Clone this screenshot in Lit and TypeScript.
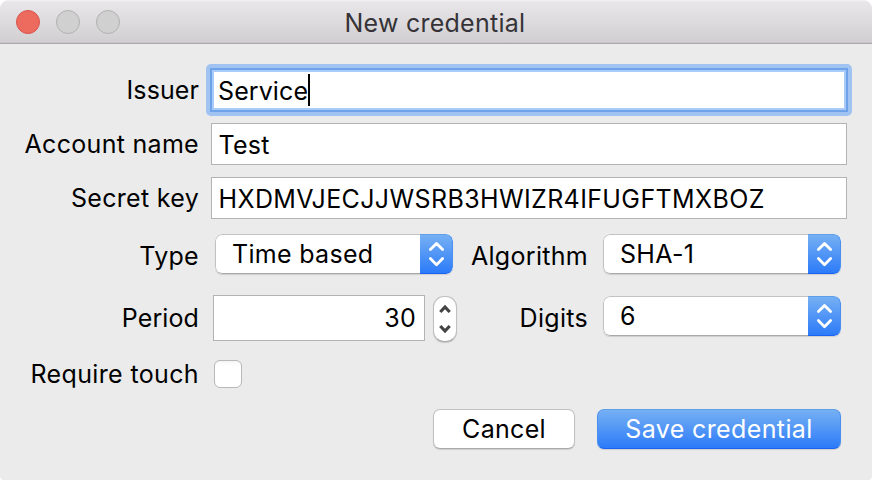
import { LitElement, html, css } from "lit";
import { customElement, property } from "lit/decorators.js";

@customElement("pop-up")
class PopUp extends LitElement {
  @property() value = "";

  static styles = css`
    :host {
      display: flex;
      box-sizing: border-box;
      width: 238px;
      height: 40px;
      border-radius: 7px;
      background: #fff;
      box-shadow: 0 1px 1px rgba(0, 0, 0, 0.12);
      overflow: hidden;
    }
    .value {
      flex: 1;
      box-sizing: border-box;
      border: 1px solid #c2c2c2;
      border-bottom-color: #a9a9a9;
      border-right: 0;
      border-radius: 7px 0 0 7px;
      padding-left: 16px;
      line-height: 38px;
      white-space: nowrap;
    }
    .cap {
      width: 33px;
      box-sizing: border-box;
      border: 1px solid #4a90ee;
      border-left: 0;
      border-top-color: #5f9fe9;
      border-bottom-color: #1b62f3;
      border-radius: 0 7px 7px 0;
      background: linear-gradient(#76b0f4, #2c7bf8);
    }
    svg {
      display: block;
    }
  `;

  render() {
    return html`
      <div class="value">${this.value}</div>
      <div class="cap">
        <svg width="32" height="38" viewBox="0 0 32 38" fill="none" stroke="#fff" stroke-width="2.8" stroke-linecap="round" stroke-linejoin="round">
          <path d="M10.4 14.6 L16.5 8.5 L22.6 14.6 M10.4 23.6 L16.5 29.7 L22.6 23.6" />
        </svg>
      </div>
    `;
  }
}

@customElement("app-root")
class AppRoot extends LitElement {
  static styles = css`
    :host {
      display: block;
      width: 872px;
      height: 480px;
      background: #fff;
      font: 25px/30px Inter, "Liberation Sans", sans-serif;
      letter-spacing: 0.3px;
      color: #000;
    }
    .window {
      height: 480px;
      border-radius: 9px 9px 4px 4px;
      background: #ebebeb;
      overflow: hidden;
    }
    .bar {
      display: flex;
      align-items: center;
      box-sizing: border-box;
      height: 44px;
      padding-left: 16px;
      gap: 16px;
      border-bottom: 1px solid #a9a9a9;
      background: linear-gradient(#f4f3f4 0, #e8e6e9 2px, #d1cfd2 42px, #bdbbbd 43px);
    }
    .light {
      box-sizing: border-box;
      width: 24px;
      height: 24px;
      border: 1px solid #b1b1b1;
      border-radius: 50%;
      background: #d0d0d0;
    }
    .close {
      border-color: #d9544b;
      background: #ed6a5f;
    }
    .title {
      flex: 1;
      margin-top: 3px;
      padding-left: 208.5px;
      color: #353337;
      white-space: nowrap;
      line-height: 40px;
      letter-spacing: 0.25px;
    }
    .form {
      display: flex;
      flex-direction: column;
      padding-top: 20px;
    }
    .row {
      display: flex;
    }
    .label {
      width: 199px;
      text-align: right;
      white-space: nowrap;
    }
    .field {
      box-sizing: border-box;
      width: 636px;
      height: 42px;
      margin-left: 12px;
      padding-left: 6.5px;
      border: 1px solid #b3b3b3;
      background: #fff;
      line-height: 42px;
      white-space: nowrap;
    }
    .issuer {
      height: 52px;
      margin-bottom: 7px;
    }
    .issuer .label {
      line-height: 53px;
    }
    .snug {
      letter-spacing: 0.1px;
    }
    .ring {
      box-sizing: border-box;
      width: 646px;
      height: 52px;
      margin-left: 7px;
      padding: 4px;
      border-radius: 5px;
      background: #a0c3f1;
    }
    .focused {
      display: flex;
      align-items: center;
      width: 638px;
      height: 44px;
      margin: 0;
      padding: 2px;
      border: 2px solid #6ea3ea;
      background: linear-gradient(#fff, #fff) content-box, #a8cbfa;
    }
    .focused .typed {
      padding: 2px 0 0 4px;
      line-height: 36px;
      letter-spacing: 0.1px;
    }
    .caret {
      width: 2px;
      height: 32px;
      background: #000;
    }
    .text-row {
      height: 42px;
      margin-bottom: 12px;
    }
    .text-row .label {
      line-height: 42px;
    }
    .secret {
      letter-spacing: 0.38px;
    }
    .choices {
      height: 40px;
      margin: 3px 0 21px;
    }
    .choices .label {
      line-height: 44px;
    }
    .choices pop-up {
      margin-left: 16px;
    }
    .choices .second {
      width: 135px;
    }
    .choices .second + pop-up,
    .numbers .second + pop-up {
      margin-left: 15px;
    }
    .numbers {
      height: 47px;
    }
    .numbers .label {
      line-height: 46px;
    }
    .number {
      width: 212px;
      height: 46px;
      margin-left: 14px;
      padding-right: 8px;
      line-height: 45px;
      text-align: right;
    }
    .stepper {
      box-sizing: border-box;
      width: 24px;
      height: 46px;
      margin: 1px 0 0 8px;
      border: 1px solid #c0c0c0;
      border-bottom-color: #aaa;
      border-radius: 11px;
      background: #fff;
      box-shadow: 0 1px 1px rgba(0, 0, 0, 0.15);
    }
    .stepper svg {
      display: block;
    }
    .numbers .second {
      width: 131px;
    }
    .numbers pop-up {
      margin-top: 1px;
    }
    .touch {
      height: 28px;
      margin-top: 18px;
    }
    .touch .label {
      line-height: 28px;
      letter-spacing: 0.36px;
    }
    .check {
      box-sizing: border-box;
      width: 28px;
      height: 28px;
      margin-left: 15px;
      border: 1px solid #b8b8b8;
      border-radius: 6px;
      background: linear-gradient(#f6f6f6, #fff 5px);
    }
    .actions {
      display: flex;
      gap: 22px;
      margin: 21px 0 0 433px;
    }
    .button {
      box-sizing: border-box;
      width: 142px;
      height: 40px;
      border: 1px solid #c2c2c2;
      border-bottom-color: #a9a9a9;
      border-radius: 7px;
      background: #fff;
      box-shadow: 0 1px 1px rgba(0, 0, 0, 0.12);
      line-height: 38px;
      text-align: center;
      white-space: nowrap;
    }
    .primary {
      width: 244px;
      border-color: #4a90ee;
      border-top-color: #5f9fe9;
      border-bottom-color: #1b62f3;
      background: linear-gradient(#76b0f4, #2c7bf8);
      color: #fff;
      letter-spacing: 0.38px;
    }
  `;

  render() {
    return html`
      <div class="window">
        <div class="bar">
          <span class="light close"></span>
          <span class="light"></span>
          <span class="light"></span>
          <div class="title">New credential</div>
        </div>
        <div class="form">
          <div class="row issuer">
            <div class="label snug">Issuer</div>
            <div class="ring">
              <div class="field focused"><span class="typed">Service</span><span class="caret"></span></div>
            </div>
          </div>
          <div class="row text-row">
            <div class="label">Account name</div>
            <div class="field">Test</div>
          </div>
          <div class="row text-row">
            <div class="label">Secret key</div>
            <div class="field secret">HXDMVJECJJWSRB3HWIZR4IFUGFTMXBOZ</div>
          </div>
          <div class="row choices">
            <div class="label">Type</div>
            <pop-up value="Time based"></pop-up>
            <div class="label second">Algorithm</div>
            <pop-up value="SHA-1"></pop-up>
          </div>
          <div class="row numbers">
            <div class="label snug">Period</div>
            <div class="field number">30</div>
            <div class="stepper">
              <svg width="22" height="44" viewBox="0 0 22 44" fill="none" stroke="#444" stroke-width="3.2">
                <path d="M6.3 15 L11 10 L15.7 15 M6.3 29 L11 34 L15.7 29" />
              </svg>
            </div>
            <div class="label second">Digits</div>
            <pop-up value="6"></pop-up>
          </div>
          <div class="row touch">
            <div class="label">Require touch</div>
            <div class="check"></div>
          </div>
          <div class="actions">
            <div class="button">Cancel</div>
            <div class="button primary">Save credential</div>
          </div>
        </div>
      </div>
    `;
  }
}
